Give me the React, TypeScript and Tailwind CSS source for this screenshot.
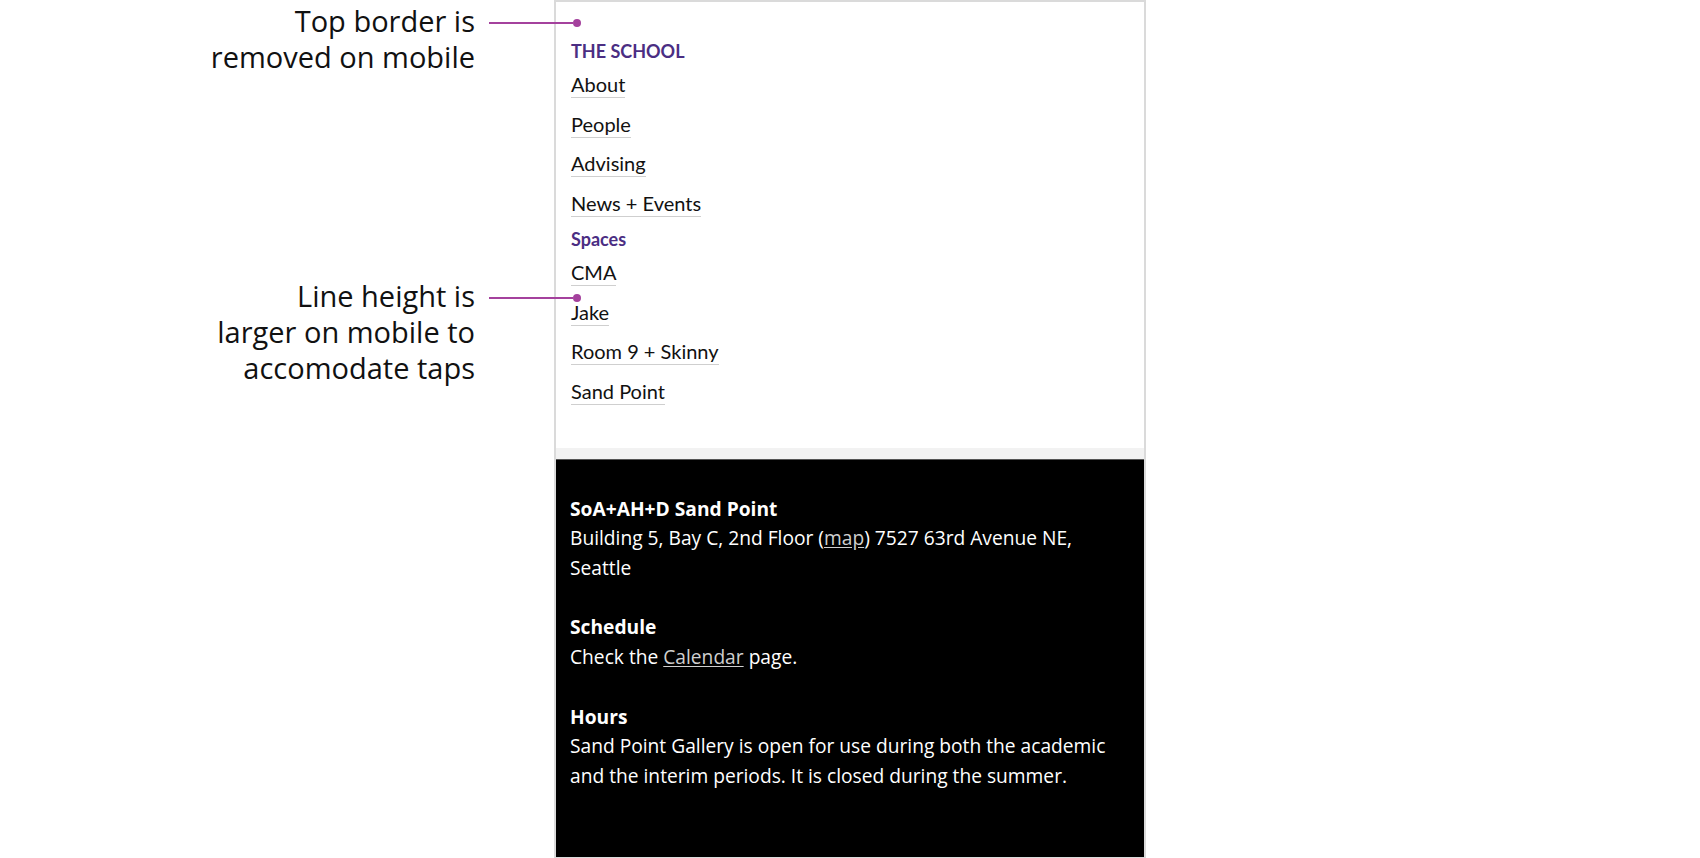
import React from "react";

type NavGroup = {
  title: string;
  items: string[];
};

const groups: NavGroup[] = [
  { title: "THE SCHOOL", items: ["About", "People", "Advising", "News + Events"] },
  { title: "Spaces", items: ["CMA", "Jake", "Room 9 + Skinny", "Sand Point"] },
];

const wideFont = { fontFamily: "'Open Sans', 'Liberation Sans', sans-serif" };

function Callout({ lines, className }: { lines: string[]; className?: string }) {
  return (
    <div className={`flex justify-end ${className ?? ""}`}>
      <p className="text-right text-[29px] leading-[36px] text-[#111]" style={wideFont}>
        {lines.map((line) => (
          <span key={line} className="block">
            {line}
          </span>
        ))}
      </p>
      <div className="relative z-10 -mr-[27px] ml-[14px] mt-[16px] flex h-[8px] w-[92px] shrink-0 items-center">
        <div className="h-[2px] flex-1 bg-[#a4419d]" />
        <div className="h-[8px] w-[8px] rounded-full bg-[#a4419d]" />
      </div>
    </div>
  );
}

export default function App() {
  return (
    <div
      className="flex h-[858px] w-full overflow-hidden bg-white"
      style={{ fontFamily: "Lato, 'Liberation Sans', sans-serif" }}
    >
      <div className="w-[554px] shrink-0 pt-[3px]">
        <Callout lines={["Top border is", "removed on mobile"]} />
        <Callout
          className="mt-[203px]"
          lines={["Line height is", "larger on mobile to", "accomodate taps"]}
        />
      </div>

      <div className="flex h-[859px] w-[592px] shrink-0 flex-col border-2 border-[#dadada]">
        <nav className="px-[15px] pb-[36px] pt-[36px]">
          {groups.map((group, i) => (
            <div key={group.title} className={i > 0 ? "mt-[2px]" : ""}>
              <h2 className="text-[18px] font-bold leading-[27px] text-[#4b2e83]">{group.title}</h2>
              <ul>
                {group.items.map((item) => (
                  <li key={item} className="text-[20px] leading-[39.7px] text-[#111]">
                    <a href="#" className="border-b-[1.5px] border-[#cfcfcf] pb-[1px]">
                      {item}
                    </a>
                  </li>
                ))}
              </ul>
            </div>
          ))}
        </nav>

        <div className="h-[12px] shrink-0 border-b border-[#555] bg-[#f2f2f2]" />

        <footer
          className="flex-1 bg-black px-[14px] pt-[34px] text-[19.2px] leading-[29.7px] text-white"
          style={wideFont}
        >
          <p>
            <strong className="font-bold">SoA+AH+D Sand Point</strong>
            <br />
            Building 5, Bay C, 2nd Floor (<a href="#" className="text-[#cfcfcf] underline underline-offset-2">map</a>) 7527 63rd Avenue NE, Seattle
          </p>
          <p className="mt-[29.7px]">
            <strong className="font-bold">Schedule</strong>
            <br />
            Check the{" "}
            <a href="#" className="text-[#cfcfcf] underline underline-offset-2">
              Calendar
            </a>{" "}
            page.
          </p>
          <p className="mt-[29.7px]">
            <strong className="font-bold">Hours</strong>
            <br />
            Sand Point Gallery is open for use during both the academic and the interim periods. It is
            closed during the summer.
          </p>
        </footer>
      </div>
    </div>
  );
}
